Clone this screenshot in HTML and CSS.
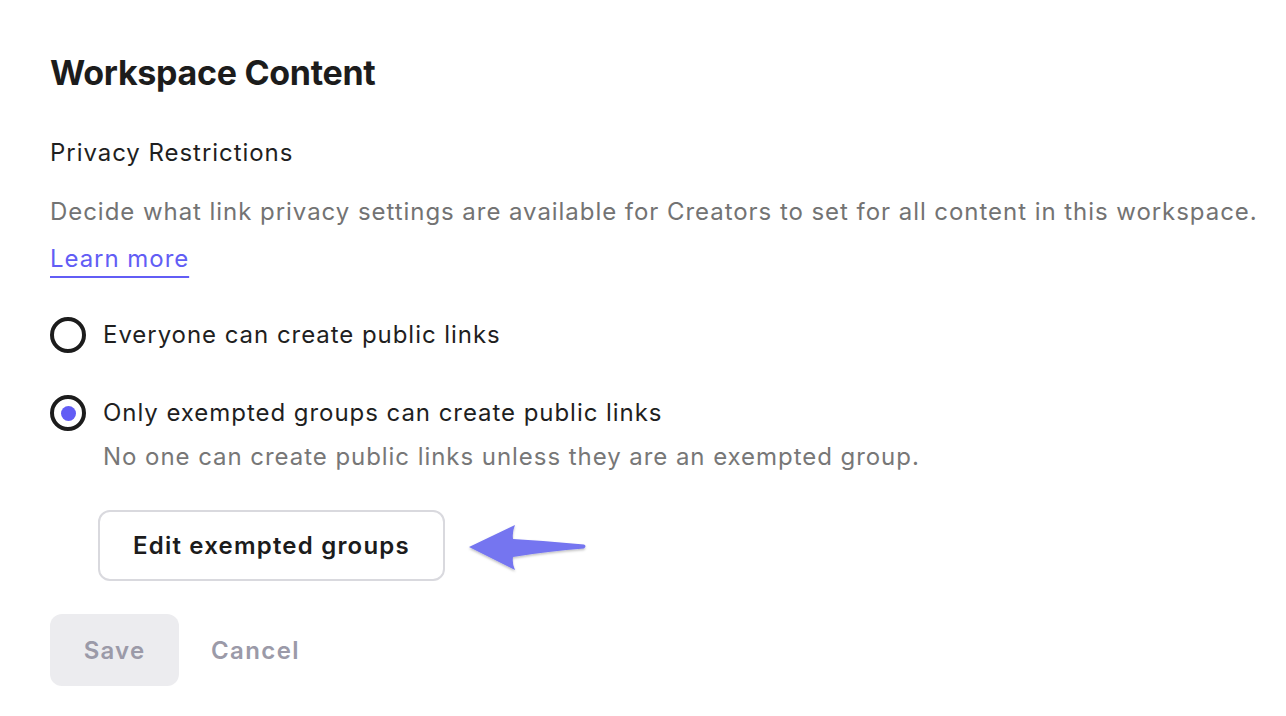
FILE: index.html
```html
<!DOCTYPE html>
<html lang="en">
<head>
<meta charset="utf-8">
<title>Workspace Content</title>
<link rel="stylesheet" href="styles.css">
</head>
<body>
<main class="page">
  <h1 class="title">Workspace Content</h1>
  <h2 class="subtitle">Privacy Restrictions</h2>
  <p class="desc">Decide what link privacy settings are available for Creators to set for all content in this workspace.</p>
  <a class="link" href="#">Learn more</a>

  <div class="option option-first">
    <div class="option-row">
      <span class="radio"></span>
      <span class="option-label">Everyone can create public links</span>
    </div>
  </div>

  <div class="option option-second">
    <div class="option-row">
      <span class="radio radio-checked"><span class="radio-dot"></span></span>
      <span class="option-label">Only exempted groups can create public links</span>
    </div>
    <p class="option-desc">No one can create public links unless they are an exempted group.</p>
  </div>

  <div class="edit-row">
    <button class="btn-outline" type="button">Edit exempted groups</button>
    <svg class="arrow" width="122" height="52" viewBox="0 0 122 52" aria-hidden="true">
      <defs>
        <filter id="sh" x="-10%" y="-20%" width="130%" height="150%">
          <feDropShadow dx="0" dy="1.5" stdDeviation="1.2" flood-color="#000" flood-opacity="0.25"/>
        </filter>
      </defs>
      <path filter="url(#sh)" fill="#7475f0" d="M2 25 L48 3 Q45 10 46 17 Q82 19 117 22.5 Q120 24 117 26.5 Q82 29 46 35 Q45 42 48 48 Z"/>
    </svg>
  </div>

  <div class="actions">
    <button class="btn-save" type="button">Save</button>
    <button class="btn-cancel" type="button">Cancel</button>
  </div>
</main>
</body>
</html>
```

FILE: styles.css
```css
html, body {
  margin: 0;
  padding: 0;
  background: #ffffff;
}

body {
  font-family: "Inter", "Liberation Sans", sans-serif;
  color: #1f1f1f;
  -webkit-font-smoothing: antialiased;
}

.page {
  padding: 53px 0 0 50px;
}

.title {
  margin: 0;
  font-size: 34px;
  line-height: 40px;
  font-weight: 700;
  letter-spacing: -0.3px;
  color: #1c1c1c;
}

.subtitle {
  margin: 44px 0 0;
  font-size: 24px;
  line-height: 32px;
  font-weight: 400;
  letter-spacing: 0.95px;
  color: #1f1f1f;
}

.desc {
  margin: 27px 0 0;
  font-size: 24px;
  line-height: 32px;
  letter-spacing: 0.95px;
  color: #737373;
  white-space: nowrap;
}

.link {
  display: inline-block;
  margin-top: 15px;
  font-size: 24px;
  line-height: 32px;
  letter-spacing: 0.95px;
  color: #625df5;
  text-decoration: underline;
  text-decoration-thickness: 2px;
  text-underline-offset: 9px;
}

.option-first {
  margin-top: 42px;
}

.option-second {
  margin-top: 42px;
}

.option-row {
  display: flex;
  align-items: center;
  gap: 17px;
}

.radio {
  box-sizing: border-box;
  width: 36px;
  height: 36px;
  border: 4px solid #1c1c1c;
  border-radius: 50%;
  display: flex;
  align-items: center;
  justify-content: center;
  flex: none;
}

.radio-dot {
  width: 15px;
  height: 15px;
  border-radius: 50%;
  background: #625df5;
}

.option-label {
  font-size: 24px;
  line-height: 32px;
  letter-spacing: 0.95px;
  color: #1f1f1f;
}

.option-desc {
  margin: 10px 0 0 53px;
  font-size: 24px;
  line-height: 32px;
  letter-spacing: 0.95px;
  color: #777777;
}

.edit-row {
  margin: 37px 0 0 48px;
  display: flex;
  align-items: center;
  gap: 22px;
}

.btn-outline {
  box-sizing: border-box;
  height: 71px;
  padding: 0 33px;
  background: #ffffff;
  border: 2px solid #d9d9de;
  border-radius: 12px;
  font-family: inherit;
  font-size: 24px;
  font-weight: 600;
  letter-spacing: 1.2px;
  color: #1c1c1c;
}

.arrow {
  display: block;
  margin-top: 4px;
}

.actions {
  margin-top: 33px;
  display: flex;
  align-items: center;
  gap: 32px;
}

.btn-save {
  box-sizing: border-box;
  width: 129px;
  height: 72px;
  border: 0;
  border-radius: 12px;
  background: #ececef;
  font-family: inherit;
  font-size: 24px;
  font-weight: 600;
  letter-spacing: 1.2px;
  color: #9b9aa8;
}

.btn-cancel {
  border: 0;
  padding: 0;
  background: transparent;
  font-family: inherit;
  font-size: 24px;
  font-weight: 600;
  letter-spacing: 1.4px;
  color: #9b9aa8;
}
```
